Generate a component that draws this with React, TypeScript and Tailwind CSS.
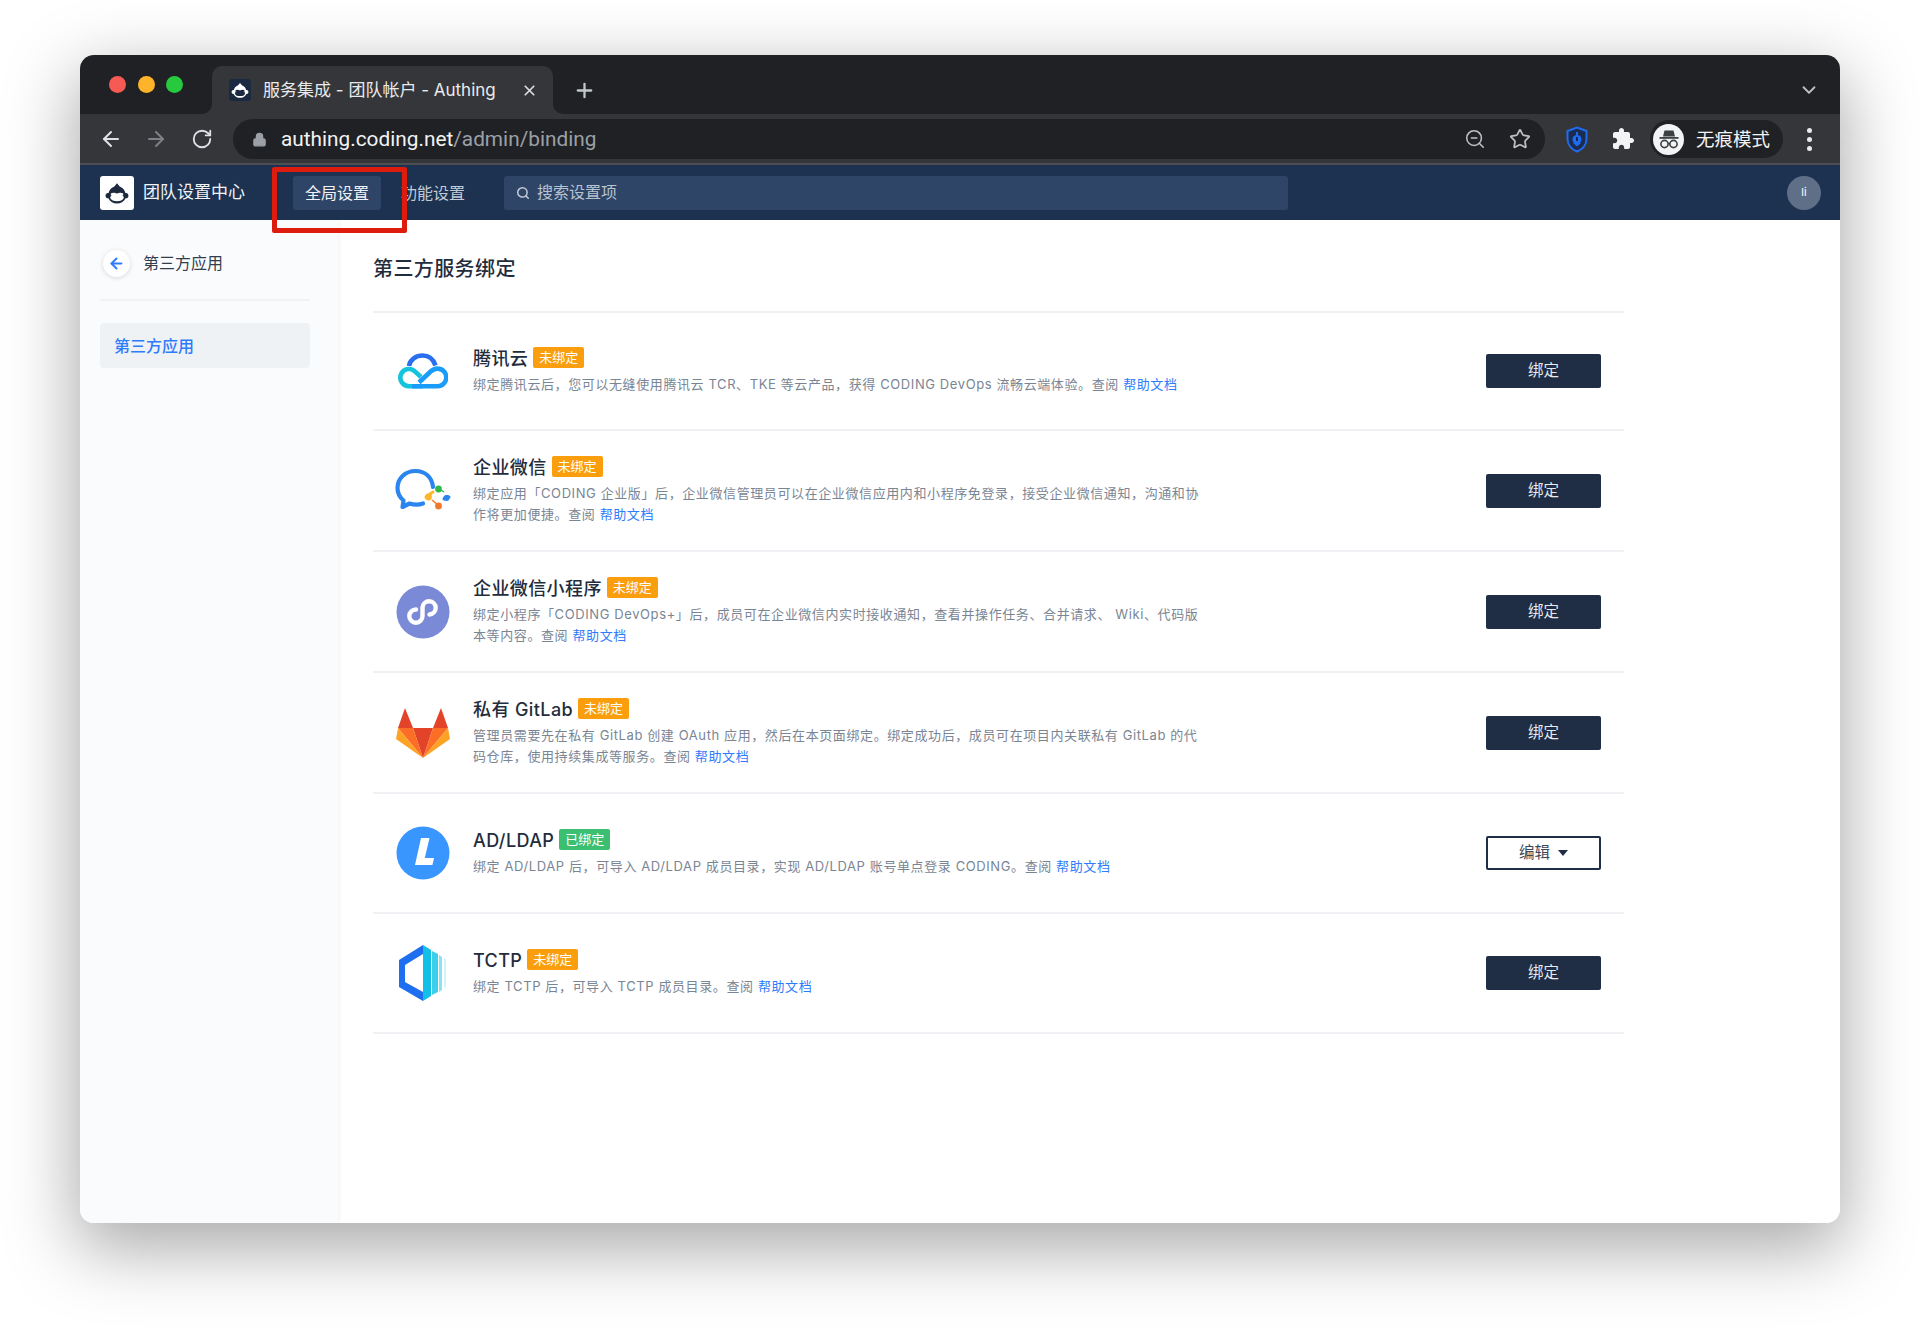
import React from "react";
import { ArrowLeft, ArrowRight, RotateCw, Lock, ZoomOut, Star, Search, X, Plus, ChevronDown } from "lucide-react";

const FONT = "[font-family:Inter,'Noto_Sans_CJK_SC',sans-serif]";

function Monkey({ fg, bg, size }: { fg: string; bg: string; size: number }) {
  return (
    <svg width={size} height={size} viewBox="0 0 34 34">
      <path d="M17 6 L20 9.5 C24 11 26 14 26.5 17 C28.5 16.5 30 18 30 20 C30 22 28.5 23.2 26.8 23 C25 27 21 29 17 29 C13 29 9 27 7.2 23 C5.5 23.2 4 22 4 20 C4 18 5.5 16.5 7.5 17 C8 14 10 11 14 9.5 Z" fill={fg} />
      <ellipse cx="17" cy="22" rx="7.6" ry="4.4" fill={bg} />
      <path d="M10 17.5 C12 16 15 16.5 17 18 C19 16.5 22 16 24 17.5 L24 19.5 L10 19.5 Z" fill={bg} />
    </svg>
  );
}

function TencentIcon() {
  return (
    <svg width="50" height="36" viewBox="0 0 50 36" fill="none">
      <path d="M11 13 C12 6.5 18 2.5 24.5 2.5 C31 2.5 35.5 6.5 37.5 12.5" stroke="#2a6ff0" strokeWidth="4.6" />
      <path d="M25 33.2 H11 A8.6 8.6 0 1 1 17.5 19 L23 24" stroke="#14c3dd" strokeWidth="4.6" />
      <path d="M14 33.2 H39.5 A8.8 8.8 0 0 0 39.5 15.6 C35.5 15.6 33.5 17.5 31 20 L21 29.5" stroke="#1a9cfb" strokeWidth="4.6" />
    </svg>
  );
}

function WecomIcon() {
  return (
    <svg width="58" height="48" viewBox="0 0 58 48" fill="none">
      <path d="M39 20 C38 10 31 4 21.5 4 C11 4 3.5 11.5 3.5 21 C3.5 26.5 6 30.5 9.5 33.5 L8.5 40 L15.5 36.5 C20 38 25 38 29 36.5" stroke="#2b85ef" strokeWidth="4.2" strokeLinecap="round" strokeLinejoin="round" />
      <path d="M44 21 L50 25" stroke="#31b94a" strokeWidth="1.5" />
      <circle cx="44.5" cy="22" r="3.4" fill="#31b94a" />
      <path d="M32 30 C34 29 37 26 39 25" stroke="#fbb62b" strokeWidth="3" strokeLinecap="round" />
      <circle cx="34.5" cy="30" r="3.4" fill="#fbb62b" />
      <path d="M50 32 C51 30 53 29 55 30" stroke="#2b85ef" strokeWidth="3" strokeLinecap="round" />
      <circle cx="52.5" cy="31" r="3" fill="#2b85ef" />
      <path d="M38 33 L44 38" stroke="#f2772b" strokeWidth="1.6" />
      <circle cx="44.5" cy="39" r="3.4" fill="#f2772b" />
    </svg>
  );
}

function MiniIcon() {
  return (
    <svg width="54" height="54" viewBox="0 0 54 54" fill="none">
      <circle cx="27" cy="27" r="26.5" fill="#7a8ad6" />
      <path d="M20 24.5 A6.6 6.6 0 1 0 26.5 31 V22.5 A6.6 6.6 0 1 1 33.5 29.5" stroke="#fff" strokeWidth="4.4" strokeLinecap="round" />
    </svg>
  );
}

function GitlabIcon() {
  return (
    <svg width="54" height="50" viewBox="0 0 54 50">
      <polygon points="9,0 2,20 17,20" fill="#e24329" />
      <polygon points="45,0 37,20 52,20" fill="#e24329" />
      <polygon points="17,20 37,20 27,50" fill="#e24329" />
      <polygon points="2,20 17,20 27,50" fill="#fc6d26" />
      <polygon points="52,20 37,20 27,50" fill="#fc6d26" />
      <polygon points="2,20 0,31 27,50" fill="#fca326" />
      <polygon points="52,20 54,31 27,50" fill="#fca326" />
    </svg>
  );
}

function LdapIcon() {
  return (
    <svg width="54" height="54" viewBox="0 0 54 54">
      <circle cx="27" cy="27" r="26.5" fill="#3a96ff" />
      <polygon points="25,12 33.5,12 28.8,32 38,32 36.4,39 19,39" fill="#fff" />
    </svg>
  );
}

function TctpIcon() {
  return (
    <svg width="48" height="56" viewBox="0 0 48 56">
      <polygon points="24,0 0,15 0,42 24,56 24,47 6,37 6,20 24,9" fill="#1e6ff0" />
      <polygon points="24,0 32,5 32,51 24,56" fill="#12bfe6" />
      <polygon points="33,6 39,9 39,47 33,50" fill="#3ccfe9" />
      <polygon points="40,10 43,12 43,45 40,47" fill="#8ae3f2" />
      <polygon points="45,13 47,14 47,42 45,43" fill="#d2f5fb" />
    </svg>
  );
}

function Shield() {
  return (
    <svg width="22" height="27" viewBox="0 0 22 27" fill="none">
      <path d="M11 1.5 L20.5 5 V13 C20.5 19 16 23.5 11 25.5 C6 23.5 1.5 19 1.5 13 V5 Z" stroke="#1f6cf0" strokeWidth="2" fill="#1a2c50" />
      <path d="M11 6 V9" stroke="#1f6cf0" strokeWidth="2" />
      <circle cx="11" cy="13.5" r="4.5" fill="#1f6cf0" />
      <path d="M11 11 V15" stroke="#0d1a33" strokeWidth="1.6" />
      <path d="M7 17 L11 20.5 L15 17" fill="#1f6cf0" />
    </svg>
  );
}

function PuzzleIcon() {
  return (
    <svg width="24" height="24" viewBox="0 0 24 24" fill="#f1f3f4">
      <path d="M20.5 11H19V7c0-1.1-.9-2-2-2h-4V3.5C13 2.12 11.88 1 10.5 1S8 2.12 8 3.5V5H4c-1.1 0-1.99.9-1.99 2v3.8H3.5c1.49 0 2.7 1.21 2.7 2.7s-1.21 2.7-2.7 2.7H2V20c0 1.1.9 2 2 2h3.8v-1.5c0-1.49 1.21-2.7 2.7-2.7 1.49 0 2.7 1.21 2.7 2.7V22H17c1.1 0 2-.9 2-2v-4h1.5c1.38 0 2.5-1.12 2.5-2.5S21.88 11 20.5 11z" />
    </svg>
  );
}

function Incognito() {
  return (
    <div className="w-[31px] h-[31px] rounded-full bg-[#f1f3f4] flex items-center justify-center">
      <svg width="24" height="24" viewBox="0 0 24 24" fill="none">
        <path d="M7.5 3.5 H16.5 L18 9.5 H6 Z" fill="#3c4043" />
        <rect x="2.5" y="10" width="19" height="1.8" fill="#3c4043" />
        <circle cx="7.5" cy="17" r="3.6" stroke="#3c4043" strokeWidth="1.6" />
        <circle cx="16.5" cy="17" r="3.6" stroke="#3c4043" strokeWidth="1.6" />
        <path d="M11 16.5 H13" stroke="#3c4043" strokeWidth="1.6" />
      </svg>
    </div>
  );
}

function Badge({ bound }: { bound?: boolean }) {
  return (
    <span className={`inline-flex items-center justify-center h-[21px] w-[51px] mb-[2px] rounded-[2px] text-[13px] leading-none text-white ${bound ? "bg-[#3cbf71]" : "bg-[#fb9e0e]"}`}>
      {bound ? "已绑定" : "未绑定"}
    </span>
  );
}

type Row = {
  h: string;
  icon: React.ReactNode;
  title: string;
  bound?: boolean;
  lines: string[];
  edit?: boolean;
};

const rows: Row[] = [
  {
    h: "h-[118px]",
    icon: <TencentIcon />,
    title: "腾讯云",
    lines: ["绑定腾讯云后，您可以无缝使用腾讯云 TCR、TKE 等云产品，获得 CODING DevOps 流畅云端体验。查阅 "],
  },
  {
    h: "h-[121px]",
    icon: <WecomIcon />,
    title: "企业微信",
    lines: ["绑定应用「CODING 企业版」后，企业微信管理员可以在企业微信应用内和小程序免登录，接受企业微信通知，沟通和协", "作将更加便捷。查阅 "],
  },
  {
    h: "h-[121px]",
    icon: <MiniIcon />,
    title: "企业微信小程序",
    lines: ["绑定小程序「CODING DevOps+」后，成员可在企业微信内实时接收通知，查看并操作任务、合并请求、 Wiki、代码版", "本等内容。查阅 "],
  },
  {
    h: "h-[121px]",
    icon: <GitlabIcon />,
    title: "私有 GitLab",
    lines: ["管理员需要先在私有 GitLab 创建 OAuth 应用，然后在本页面绑定。绑定成功后，成员可在项目内关联私有 GitLab 的代", "码仓库，使用持续集成等服务。查阅 "],
  },
  {
    h: "h-[120px]",
    icon: <LdapIcon />,
    title: "AD/LDAP",
    bound: true,
    edit: true,
    lines: ["绑定 AD/LDAP 后，可导入 AD/LDAP 成员目录，实现 AD/LDAP 账号单点登录 CODING。查阅 "],
  },
  {
    h: "h-[120px]",
    icon: <TctpIcon />,
    title: "TCTP",
    lines: ["绑定 TCTP 后，可导入 TCTP 成员目录。查阅 "],
  },
];

function ServiceRow({ row }: { row: Row }) {
  return (
    <div className={`${row.h} flex items-center border-b-2 border-[#eff1f4] pr-[23px]`}>
      <div className="w-[100px] flex items-center justify-center shrink-0">{row.icon}</div>
      <div className="flex-1 min-w-0 pb-[1px]">
        <div className="flex items-center gap-[5px] h-[24px] mb-[3px]">
          <span className="text-[18px] leading-[24px] font-medium tracking-[0.4px] text-[#1f2d3d]">{row.title}</span>
          <Badge bound={row.bound} />
        </div>
        <div className="text-[13px] leading-[21px] tracking-[0.6px] text-[#7a8594] whitespace-pre-wrap">
          {row.lines.map((l, i) => (
            <div key={i}>
              {l}
              {i === row.lines.length - 1 && <a className="text-[#2e7bfb]">帮助文档</a>}
            </div>
          ))}
        </div>
      </div>
      {row.edit ? (
        <button className="w-[115px] h-[34px] rounded-[2px] border-2 border-[#1f2d45] bg-white text-[15.5px] text-[#3c4858] flex items-center justify-center gap-[8px]">
          编辑
          <svg width="10" height="6" viewBox="0 0 10 6"><polygon points="0,0 10,0 5,6" fill="#1f2d45" /></svg>
        </button>
      ) : (
        <button className="w-[115px] h-[34px] rounded-[2px] bg-[#1f2d45] text-[15.5px] text-[#e6e9ee] flex items-center justify-center">绑定</button>
      )}
    </div>
  );
}

export default function App() {
  return (
    <div className={`w-[1920px] h-[1328px] bg-white pt-[55px] px-[80px] overflow-hidden ${FONT}`}>
      <div className="relative h-[1168px] rounded-[14px] flex flex-col shadow-[0_22px_70px_4px_rgba(0,0,0,0.34)]">
        {/* tab strip */}
        <div className="h-[59px] shrink-0 bg-[#202124] rounded-t-[14px] flex items-end pl-[28px]">
          <div className="flex items-center gap-[11.5px] w-[93px] h-[60px] pl-[1px]">
            <span className="w-[17px] h-[17px] rounded-full bg-[#f55a55]" />
            <span className="w-[17px] h-[17px] rounded-full bg-[#fdb42a]" />
            <span className="w-[17px] h-[17px] rounded-full bg-[#27c93f]" />
          </div>
          <div className="w-[11px] h-[10px] bg-[#35363a]">
            <div className="w-full h-full bg-[#202124] rounded-br-[10px]" />
          </div>
          <div className="w-[341px] h-[48px] bg-[#35363a] rounded-t-[10px] flex items-center pl-[17px] pr-[15px]">
            <div className="w-[22px] h-[22px] rounded-[3px] bg-[#1b2a40] flex items-center justify-center overflow-hidden">
              <Monkey fg="#ffffff" bg="#1b2a40" size={22} />
            </div>
            <span className="ml-[12px] text-[17px] leading-[24px] text-[#e8eaed] whitespace-nowrap">服务集成 - 团队帐户 - Authing</span>
            <X className="ml-auto text-[#dadce0]" size={17} strokeWidth={2.4} />
          </div>
          <div className="w-[11px] h-[10px] bg-[#35363a]">
            <div className="w-full h-full bg-[#202124] rounded-bl-[10px]" />
          </div>
          <div className="h-[48px] flex items-center ml-[9px]">
            <Plus className="text-[#c4c7ca]" size={23} strokeWidth={2.4} />
          </div>
          <div className="ml-auto h-[59px] flex items-center pt-[11px] pr-[20px]">
            <ChevronDown className="text-[#bdc1c6]" size={22} strokeWidth={2} />
          </div>
        </div>

        {/* toolbar */}
        <div className="h-[51px] shrink-0 bg-[#35363a] border-b-2 border-[#4c4e52] flex items-center pt-[1px]">
          <div className="w-[153px] pl-[19px] flex items-center gap-[21px] shrink-0">
            <ArrowLeft className="text-[#dee1e6]" size={24} strokeWidth={2} />
            <ArrowRight className="text-[#7d8084]" size={24} strokeWidth={2} />
            <RotateCw className="ml-[2px] text-[#dee1e6]" size={22} strokeWidth={2} />
          </div>
          <div className="w-[1312px] h-[40px] rounded-full bg-[#202124] flex items-center pl-[19px] pr-[14px] shrink-0">
            <Lock className="text-[#9aa0a6]" size={15} fill="#9aa0a6" />
            <span className="ml-[14px] text-[20.8px] leading-none text-[#f1f3f4] [font-family:Roboto,sans-serif]">
              authing.coding.net<span className="text-[#9aa0a6]">/admin/binding</span>
            </span>
            <ZoomOut className="ml-auto text-[#bdc1c6]" size={22} strokeWidth={1.7} />
            <Star className="ml-[23px] text-[#bdc1c6]" size={22} strokeWidth={1.9} />
          </div>
          <div className="ml-[21px] flex items-center shrink-0">
            <Shield />
            <div className="ml-[23px]"><PuzzleIcon /></div>
            <div className="ml-[15px] h-[38px] w-[133px] rounded-full bg-[#202124] flex items-center pl-[3px]">
              <Incognito />
              <span className="ml-[12px] text-[18.5px] leading-none text-[#f1f3f4] whitespace-nowrap">无痕模式</span>
            </div>
            <div className="ml-[24px] flex flex-col gap-[4px]">
              <span className="w-[5px] h-[5px] rounded-full bg-[#e8eaed]" />
              <span className="w-[5px] h-[5px] rounded-full bg-[#e8eaed]" />
              <span className="w-[5px] h-[5px] rounded-full bg-[#e8eaed]" />
            </div>
          </div>
        </div>

        {/* app header */}
        <div className="h-[55px] shrink-0 bg-[#1c3250] flex items-center pl-[20px] pr-[19px]">
          <div className="w-[34px] h-[34px] rounded-[3px] bg-white flex items-center justify-center">
            <Monkey fg="#1d2a3e" bg="#ffffff" size={30} />
          </div>
          <span className="ml-[9px] w-[150px] text-[17px] leading-none text-[#f1f3f6] whitespace-nowrap">团队设置中心</span>
          <div className="w-[88px] h-[34px] rounded-[3px] bg-[#2e4567] flex items-center justify-center text-[16px] text-[#f1f3f6]">全局设置</div>
          <div className="ml-[20px] w-[64px] text-[16px] text-[#c3cbd6] whitespace-nowrap">功能设置</div>
          <div className="ml-[39px] w-[784px] h-[34px] rounded-[3px] bg-[#2e4567] flex items-center pl-[12px]">
            <Search className="text-[#c3cbd6]" size={14} strokeWidth={2.6} />
            <span className="ml-[7px] pb-[2px] text-[16px] text-[#b9c2cf]">搜索设置项</span>
          </div>
          <div className="ml-auto w-[34px] h-[34px] rounded-full bg-[#5f6f88] flex items-center justify-center text-[11px] text-white">li</div>
        </div>

        {/* body */}
        <div className="flex-1 flex min-h-0 bg-white rounded-b-[14px] overflow-hidden">
          <aside className="w-[258px] shrink-0 bg-[#fafbfd] shadow-[1px_0_4px_rgba(40,60,90,0.07)] pl-[20px] pr-[28px]">
            <div className="h-[81px] border-b-2 border-[#f0f2f5] flex items-center pt-[7px] pl-[3px]">
              <div className="w-[27px] h-[27px] rounded-full bg-white shadow-[0_1px_5px_rgba(0,0,0,0.14)] flex items-center justify-center">
                <ArrowLeft className="text-[#2e7bfb]" size={17} strokeWidth={2.8} />
              </div>
              <span className="ml-[13px] text-[16px] text-[#323e4e]">第三方应用</span>
            </div>
            <div className="mt-[22px] h-[45px] rounded-[4px] bg-[#eff2f5] flex items-center pl-[14px] text-[16px] font-medium text-[#2e7bfb]">第三方应用</div>
          </aside>
          <main className="flex-1 pl-[35px]">
            <div className="w-[1251px]">
              <div className="h-[93px] border-b-2 border-[#eff1f4] pt-[35px]">
                <h1 className="text-[20px] leading-[28px] font-medium tracking-[0.4px] text-[#1f2d3d]">第三方服务绑定</h1>
              </div>
              {rows.map((r) => (
                <ServiceRow key={r.title} row={r} />
              ))}
            </div>
          </main>
        </div>

        {/* annotation */}
        <div className="absolute left-[192px] top-[112px] w-[135px] h-[66px] border-[5px] border-[#dd1c0d] rounded-[2px] pointer-events-none" />
      </div>
    </div>
  );
}
